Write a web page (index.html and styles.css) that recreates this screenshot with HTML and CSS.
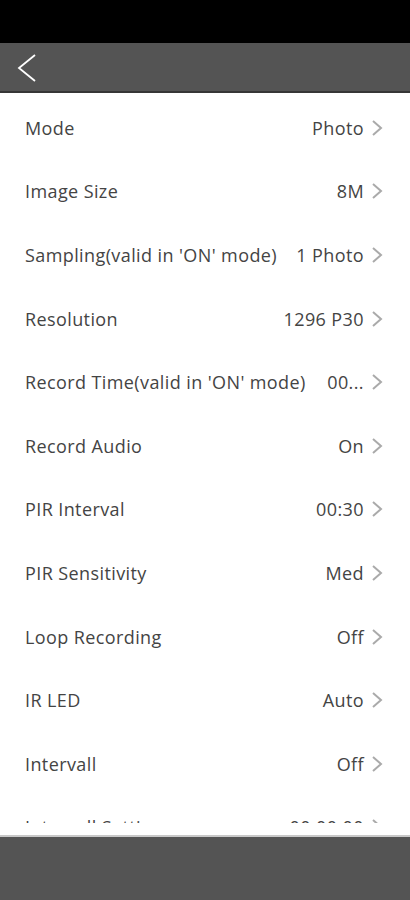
FILE: index.html
```html
<!DOCTYPE html>
<html lang="en">
<head>
    <meta charset="UTF-8">
    <meta name="viewport" content="width=device-width, initial-scale=1.0">
    <title>Camera Settings</title>
    <link rel="stylesheet" href="styles.css">
</head>
<body>

<div class="status-bar"></div>

<div class="top-bar">
    <svg class="back" width="24" height="30" viewBox="0 0 24 30">
        <polyline points="20,2 4,15 20,28" fill="none" stroke="#fff" stroke-width="1.8"/>
    </svg>
</div>

<div class="settings">
    <div class="row"><span class="label">Mode</span><span class="value">Photo</span><svg class="arrow" width="12" height="16" viewBox="0 0 12 16"><polyline points="2,1 10,8 2,15"/></svg></div>
    <div class="row"><span class="label">Image Size</span><span class="value">8M</span><svg class="arrow" width="12" height="16" viewBox="0 0 12 16"><polyline points="2,1 10,8 2,15"/></svg></div>
    <div class="row"><span class="label">Sampling(valid in 'ON' mode)</span><span class="value">1 Photo</span><svg class="arrow" width="12" height="16" viewBox="0 0 12 16"><polyline points="2,1 10,8 2,15"/></svg></div>
    <div class="row"><span class="label">Resolution</span><span class="value">1296 P30</span><svg class="arrow" width="12" height="16" viewBox="0 0 12 16"><polyline points="2,1 10,8 2,15"/></svg></div>
    <div class="row"><span class="label">Record Time(valid in 'ON' mode)</span><span class="value">00...</span><svg class="arrow" width="12" height="16" viewBox="0 0 12 16"><polyline points="2,1 10,8 2,15"/></svg></div>
    <div class="row"><span class="label">Record Audio</span><span class="value">On</span><svg class="arrow" width="12" height="16" viewBox="0 0 12 16"><polyline points="2,1 10,8 2,15"/></svg></div>
    <div class="row"><span class="label">PIR Interval</span><span class="value">00:30</span><svg class="arrow" width="12" height="16" viewBox="0 0 12 16"><polyline points="2,1 10,8 2,15"/></svg></div>
    <div class="row"><span class="label">PIR Sensitivity</span><span class="value">Med</span><svg class="arrow" width="12" height="16" viewBox="0 0 12 16"><polyline points="2,1 10,8 2,15"/></svg></div>
    <div class="row"><span class="label">Loop Recording</span><span class="value">Off</span><svg class="arrow" width="12" height="16" viewBox="0 0 12 16"><polyline points="2,1 10,8 2,15"/></svg></div>
    <div class="row"><span class="label">IR LED</span><span class="value">Auto</span><svg class="arrow" width="12" height="16" viewBox="0 0 12 16"><polyline points="2,1 10,8 2,15"/></svg></div>
    <div class="row"><span class="label">Intervall</span><span class="value">Off</span><svg class="arrow" width="12" height="16" viewBox="0 0 12 16"><polyline points="2,1 10,8 2,15"/></svg></div>
    <div class="row"><span class="label">Intervall Setting</span><span class="value">00:00:00</span><svg class="arrow" width="12" height="16" viewBox="0 0 12 16"><polyline points="2,1 10,8 2,15"/></svg></div>
</div>

<div class="bottom-bar"></div>

</body>
</html>
```

FILE: styles.css
```css
body {
    margin: 0;
    height: 900px;
    display: flex;
    flex-direction: column;
    font-family: "Open Sans", Arial, sans-serif;
    background: #fff;
    overflow: hidden;
}

.status-bar {
    height: 43px;
    background: #000;
}

/* Header with the back arrow */
.top-bar {
    height: 48px;
    background: #545454;
    border-bottom: 2px solid #363636;
    display: flex;
    align-items: center;
    padding-left: 15px;
}

.back {
    display: block;
    margin-top: 2px;
}

/* Settings list, cut off at the bottom like a scroll view */
.settings {
    height: 727px;
    margin-top: 3px;
    overflow: hidden;
}

.row {
    height: 63.6px;
    display: flex;
    align-items: center;
    padding: 0 27px 0 25px;
    font-size: 18px;
    letter-spacing: 0.4px;
    color: #444;
}

.label {
    flex: 1;
    white-space: nowrap;
}

.value {
    color: #444;
    margin-left: 12px;
}

/* Grey chevron */
.arrow {
    display: block;
    margin-left: 7px;
}

.arrow polyline {
    fill: none;
    stroke: #aaa;
    stroke-width: 2;
}

.bottom-bar {
    margin-top: auto;
    height: 63px;
    background: #545454;
    border-top: 2px solid #c8c8c8;
}
```
